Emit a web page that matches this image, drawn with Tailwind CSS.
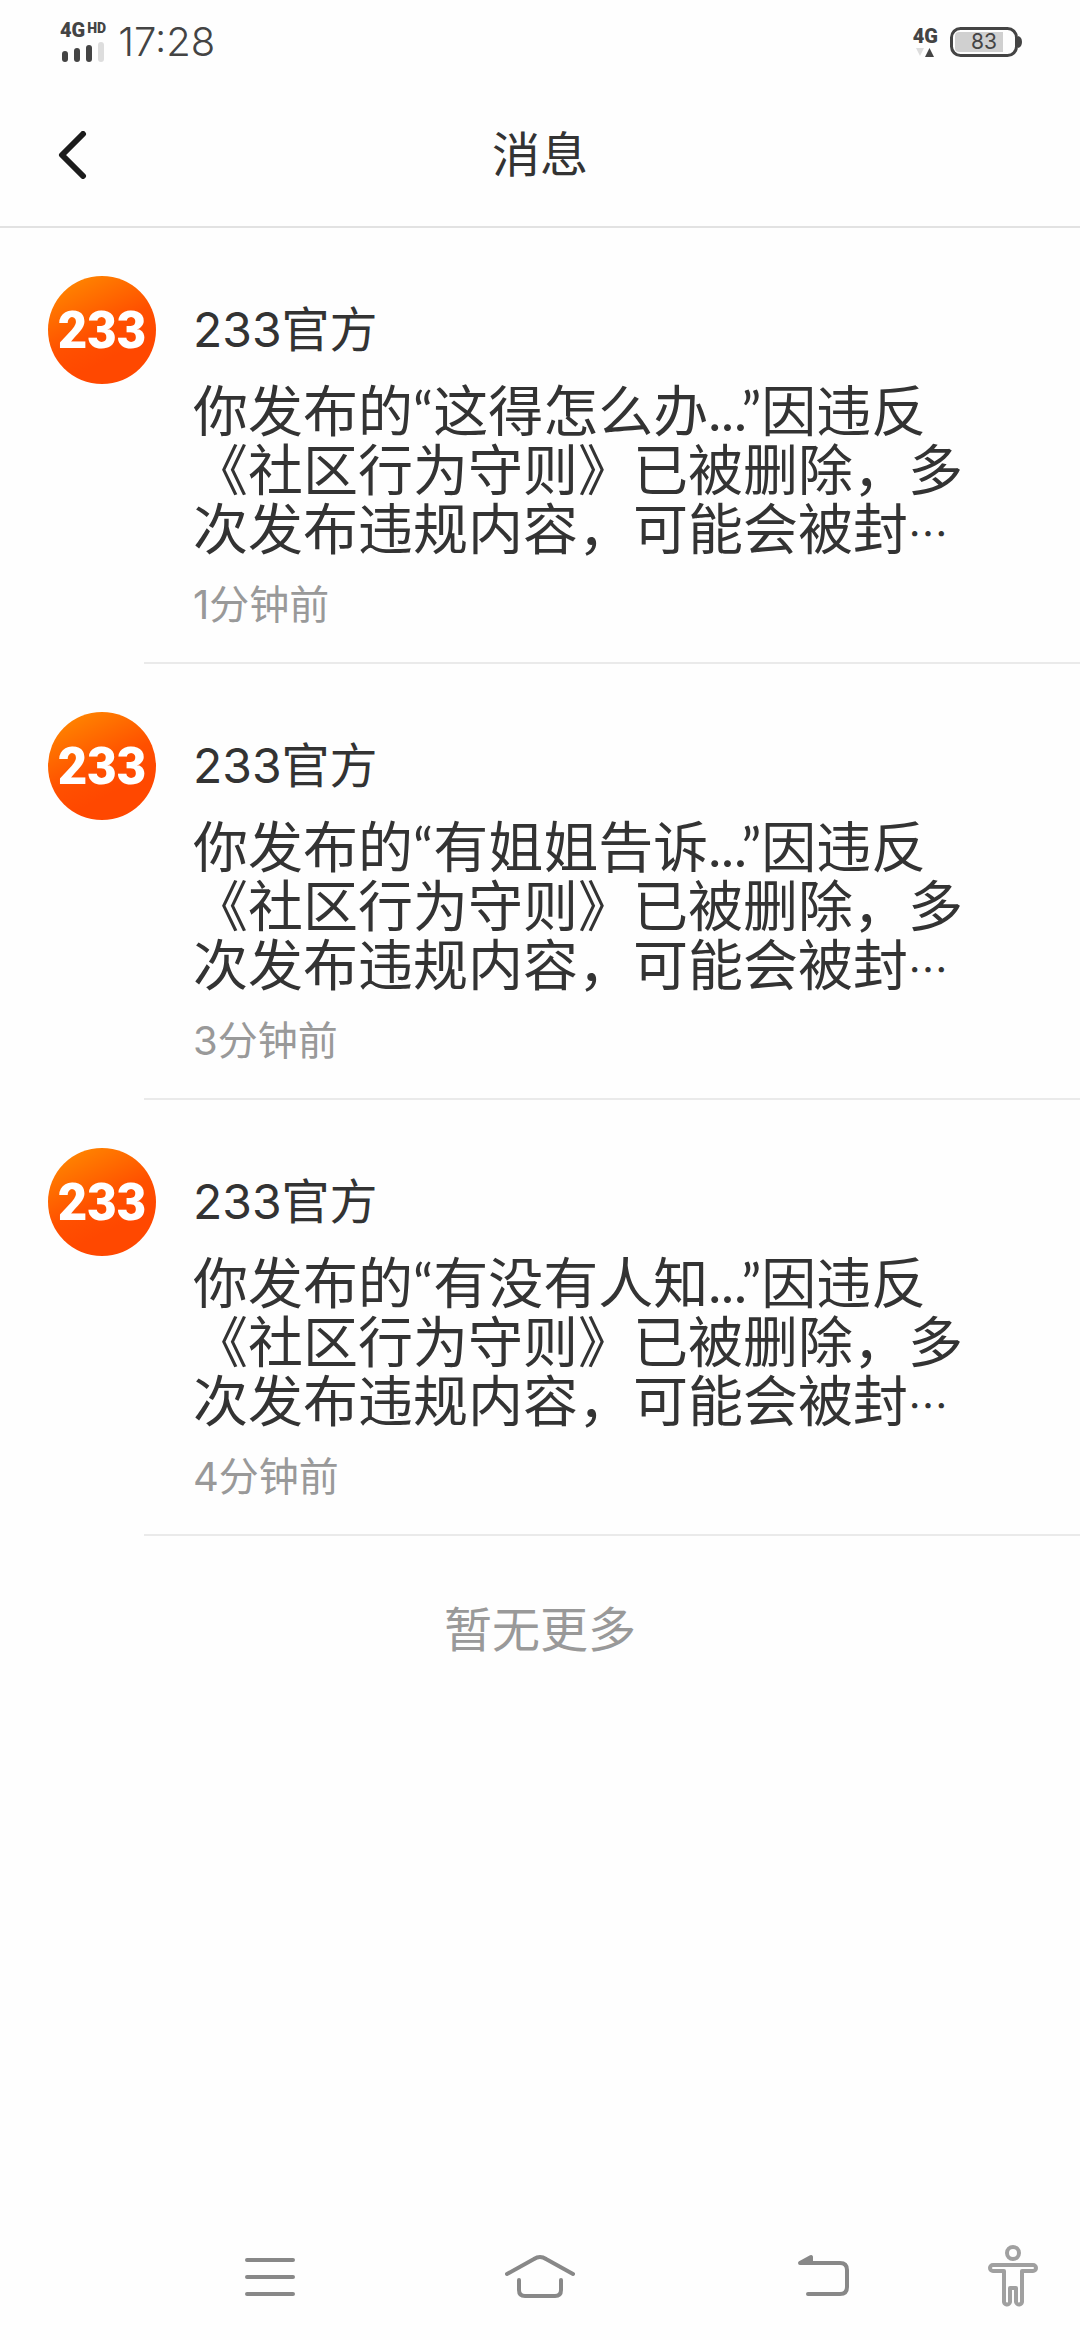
<!DOCTYPE html>
<html lang="zh-CN">
    <head>
        <meta charset="UTF-8" />
        <meta name="viewport" content="width=device-width, initial-scale=1.0" />
        <title>消息</title>
        <script src="https://cdn.jsdelivr.net/npm/@tailwindcss/browser@4"></script>
    </head>
    <body class="flex min-h-screen flex-col bg-[#fefefe] font-['Inter','Noto_Sans_CJK_SC',sans-serif] text-[#333333]">
        <!-- Status bar -->
        <div class="flex h-[84px] items-center justify-between pr-[58px] pl-[60px] text-[#444444]">
            <div class="flex items-center gap-3">
                <div class="flex flex-col gap-1 font-['Roboto',sans-serif] font-black">
                    <div class="flex items-start gap-[2px]">
                        <span class="text-[20px] leading-4">4G</span>
                        <span class="text-[14px] leading-3">HD</span>
                    </div>
                    <svg class="ml-[2px] h-5 w-[42px]" viewBox="0 0 42 20" fill="currentColor">
                        <rect x="0" y="9" width="6" height="11" rx="3" />
                        <rect x="12" y="6" width="6" height="14" rx="3" />
                        <rect x="24" y="3" width="6" height="17" rx="3" />
                        <rect x="36" y="0" width="6" height="20" rx="3" fill="#dddddd" />
                    </svg>
                </div>
                <time class="text-[40px] leading-10 font-light">17:28</time>
            </div>
            <div class="flex items-center gap-3">
                <div class="flex flex-col items-center gap-1 font-['Roboto',sans-serif] font-black">
                    <span class="text-[20px] leading-4">4G</span>
                    <svg class="h-[9px] w-[18px]" viewBox="0 0 18 9">
                        <path d="M0 0h8L4 8z" fill="#dddddd" />
                        <path d="M9 9h9L13.500 0z" fill="#444444" />
                    </svg>
                </div>
                <svg class="h-[30px] w-[72px]" viewBox="0 0 72 30">
                    <path d="M9 5h44v20H9a4 4 0 0 1-4-4V9a4 4 0 0 1 4-4z" fill="#d0d0d0" />
                    <rect x="1.500" y="1.500" width="65" height="27" rx="9" fill="none" stroke="#444444" stroke-width="3" />
                    <path d="M68 9q4 1 4 6t-4 6z" fill="#444444" />
                    <text x="34" y="22" text-anchor="middle" font-size="21" fill="#444444">83</text>
                </svg>
            </div>
        </div>

        <!-- Title bar -->
        <header class="relative flex h-36 items-center justify-center border-b-2 border-[#e2e2e2]">
            <button type="button" aria-label="返回" class="absolute left-[56px]">
                <svg class="h-12 w-8" viewBox="0 0 32 48" fill="none" stroke="#1c1c1c" stroke-width="6" stroke-linecap="round" stroke-linejoin="round">
                    <path d="M27 3L6 24L27 45" />
                </svg>
            </button>
            <h1 class="text-[48px] leading-[60px]">消息</h1>
        </header>

        <main>
            <ul>
                <li class="flex h-[436px] gap-[37px] pt-12 pl-12 bg-[linear-gradient(#eaeaea,#eaeaea)] bg-[length:calc(100%-144px)_2px] bg-right-bottom bg-no-repeat">
                    <svg class="size-[108px] shrink-0" viewBox="0 0 108 108">
                        <defs>
                            <linearGradient id="orange" x1="0.1" y1="0" x2="0.5" y2="0.8">
                                <stop offset="0" stop-color="#ff8c00" />
                                <stop offset="0.7" stop-color="#ff5000" />
                                <stop offset="1" stop-color="#ff4800" />
                            </linearGradient>
                        </defs>
                        <circle cx="54" cy="54" r="54" fill="url(#orange)" />
                        <text x="54" y="72" text-anchor="middle" font-size="51" fill="#ffffff" class="font-['Roboto',sans-serif] font-black">233</text>
                    </svg>
                    <div class="flex-1 pr-[100px]">
                        <h2 class="pt-6 text-[48px] leading-[60px]">233官方</h2>
                        <p class="pt-[22px] text-[55px] leading-[59px]">你发布的<span class="font-['Lato'] leading-10">“</span>这得怎么办<span class="font-['Lato'] leading-10">...”</span>因违反《社区行为守则》已被删除，多次发布违规内容，可能会被封<span class="font-['Noto_Sans_CJK_SC'] text-[40px] leading-8">…</span></p>
                        <time class="block pt-4 text-[40px] leading-[60px] text-[#999999]">1分钟前</time>
                    </div>
                </li>
                <li class="flex h-[436px] gap-[37px] pt-12 pl-12 bg-[linear-gradient(#eaeaea,#eaeaea)] bg-[length:calc(100%-144px)_2px] bg-right-bottom bg-no-repeat">
                    <svg class="size-[108px] shrink-0" viewBox="0 0 108 108">
                        <circle cx="54" cy="54" r="54" fill="url(#orange)" />
                        <text x="54" y="72" text-anchor="middle" font-size="51" fill="#ffffff" class="font-['Roboto',sans-serif] font-black">233</text>
                    </svg>
                    <div class="flex-1 pr-[100px]">
                        <h2 class="pt-6 text-[48px] leading-[60px]">233官方</h2>
                        <p class="pt-[22px] text-[55px] leading-[59px]">你发布的<span class="font-['Lato'] leading-10">“</span>有姐姐告诉<span class="font-['Lato'] leading-10">...”</span>因违反《社区行为守则》已被删除，多次发布违规内容，可能会被封<span class="font-['Noto_Sans_CJK_SC'] text-[40px] leading-8">…</span></p>
                        <time class="block pt-4 text-[40px] leading-[60px] text-[#999999]">3分钟前</time>
                    </div>
                </li>
                <li class="flex h-[436px] gap-[37px] pt-12 pl-12 bg-[linear-gradient(#eaeaea,#eaeaea)] bg-[length:calc(100%-144px)_2px] bg-right-bottom bg-no-repeat">
                    <svg class="size-[108px] shrink-0" viewBox="0 0 108 108">
                        <circle cx="54" cy="54" r="54" fill="url(#orange)" />
                        <text x="54" y="72" text-anchor="middle" font-size="51" fill="#ffffff" class="font-['Roboto',sans-serif] font-black">233</text>
                    </svg>
                    <div class="flex-1 pr-[100px]">
                        <h2 class="pt-6 text-[48px] leading-[60px]">233官方</h2>
                        <p class="pt-[22px] text-[55px] leading-[59px]">你发布的<span class="font-['Lato'] leading-10">“</span>有没有人知<span class="font-['Lato'] leading-10">...”</span>因违反《社区行为守则》已被删除，多次发布违规内容，可能会被封<span class="font-['Noto_Sans_CJK_SC'] text-[40px] leading-8">…</span></p>
                        <time class="block pt-4 text-[40px] leading-[60px] text-[#999999]">4分钟前</time>
                    </div>
                </li>
            </ul>
            <p class="pt-16 text-center text-[48px] leading-[60px] text-[#999999]">暂无更多</p>
        </main>

        <!-- System navigation -->
        <nav class="mt-auto flex h-32 items-center pl-[12.5%]">
            <button type="button" aria-label="最近任务" class="flex flex-2 justify-center">
                <svg class="h-[70px] w-[50px]" viewBox="0 0 50 70" fill="none" stroke="#888888" stroke-width="4" stroke-linecap="round">
                    <path d="M2 19H48M2 36H48M2 53H48" />
                </svg>
            </button>
            <button type="button" aria-label="主屏幕" class="flex flex-2 justify-center">
                <svg class="h-[70px] w-[70px]" viewBox="0 0 70 70" fill="none" stroke="#888888" stroke-width="4" stroke-linecap="round">
                    <path d="M2 33L29 18Q35 14 41 18L68 33" />
                    <path d="M14 39V49Q14 55 20 55H50Q56 55 56 49V39" />
                </svg>
            </button>
            <button type="button" aria-label="返回上一页" class="flex flex-2 justify-center">
                <svg class="h-[70px] w-[78px]" viewBox="0 0 78 70" fill="none" stroke="#888888" stroke-width="4" stroke-linecap="round" stroke-linejoin="round">
                    <path d="M30 22H69Q76 22 76 29V46Q76 53 69 53H37" />
                    <path d="M29 22L40 16V22Z" fill="#888888" />
                </svg>
            </button>
            <button type="button" aria-label="无障碍" class="flex flex-1 justify-center">
                <svg class="h-[70px] w-[52px]" viewBox="0 0 52 70" fill="none" stroke="#a0a0a0" stroke-width="4" stroke-linejoin="round">
                    <circle cx="26" cy="12" r="6" />
                    <path d="M6 24H46a3 3 0 0 1 0 6H35V60a3 3 0 0 1-6 1V47H23V61a3 3 0 0 1-6-1V30H6a3 3 0 0 1 0-6z" />
                </svg>
            </button>
        </nav>
    </body>
</html>
